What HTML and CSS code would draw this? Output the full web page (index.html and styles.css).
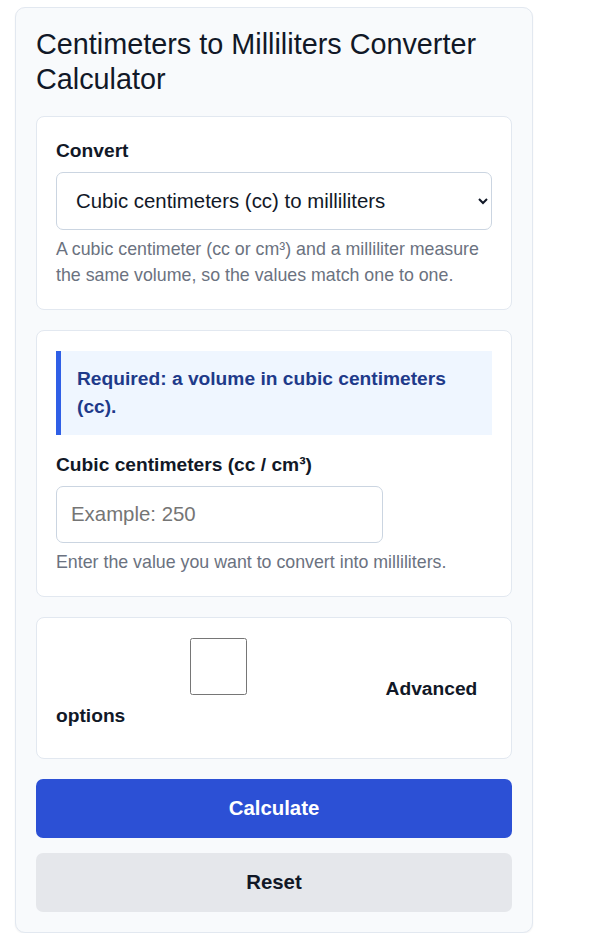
FILE: index.html
```html
<!DOCTYPE html>
<html lang="en">
<head>
<meta charset="utf-8">
<title>Centimeters to Milliliters Converter Calculator</title>
<link rel="stylesheet" href="styles.css">
</head>
<body>
<div class="calc">
  <h1 class="calc-title">Centimeters to Milliliters Converter Calculator</h1>

  <div class="card">
    <label class="field-label" for="mode">Convert</label>
    <select id="mode" class="field-select">
      <option>Cubic centimeters (cc) to milliliters</option>
    </select>
    <p class="hint">A cubic centimeter (cc or cm³) and a milliliter measure the same volume, so the values match one to one.</p>
  </div>

  <div class="card">
    <div class="notice">Required: a volume in cubic centimeters (cc).</div>
    <label class="field-label" for="cc">Cubic centimeters (cc / cm³)</label>
    <input id="cc" class="field-input" type="text" placeholder="Example: 250">
    <p class="hint">Enter the value you want to convert into milliliters.</p>
  </div>

  <div class="card">
    <label class="field-label"><input class="field-check" type="checkbox"> Advanced options</label>
  </div>

  <button class="btn btn-primary" type="button">Calculate</button>
  <button class="btn btn-secondary" type="button">Reset</button>
</div>
</body>
</html>
```

FILE: styles.css
```css
html, body {
  margin: 0;
  padding: 0;
  background: #ffffff;
}

body {
  font-family: "Liberation Sans", Arial, sans-serif;
  color: #111827;
}

.calc {
  box-sizing: border-box;
  width: 518px;
  margin: 7px 0 0 15px;
  padding: 19px 20px 20px;
  background: #f8fafc;
  border: 1px solid #e2e8f0;
  border-radius: 10px;
  box-shadow: 0 1px 2px rgba(15, 23, 42, 0.06);
}

.calc-title {
  margin: 0 0 20px;
  font-size: 28.8px;
  line-height: 34.5px;
  font-weight: 400;
  color: #111827;
}

.card {
  background: #ffffff;
  border: 1px solid #e2e8f0;
  border-radius: 8px;
  padding: 20px 19px 21px;
  margin-bottom: 20px;
}

.field-label {
  display: block;
  margin-bottom: 8px;
  font-size: 19.2px;
  line-height: 27px;
  font-weight: 700;
  color: #111827;
}

.field-select {
  box-sizing: border-box;
  display: block;
  width: 100%;
  height: 58px;
  padding: 0 18px 0 15px;
  font-family: inherit;
  font-size: 20.4px;
  color: #111827;
  background: #ffffff;
  border: 1px solid #cbd5e1;
  border-radius: 7px;
}

.field-input {
  box-sizing: border-box;
  display: block;
  width: 327px;
  height: 57px;
  padding: 0 14px;
  font-family: inherit;
  font-size: 20.4px;
  color: #111827;
  background: #ffffff;
  border: 1px solid #cbd5e1;
  border-radius: 7px;
}

.field-input::placeholder {
  color: #757575;
}

.field-check {
  width: 325px;
  height: 57px;
  margin: 0;
  vertical-align: baseline;
}

.hint {
  margin: 6px 0 0;
  font-size: 17.8px;
  line-height: 26px;
  color: #6b7280;
}

.notice {
  margin-bottom: 16px;
  padding: 14px 16px;
  background: #eff6ff;
  border-left: 5px solid #2f5fe6;
  font-size: 19.2px;
  line-height: 28px;
  font-weight: 700;
  color: #1e3a8a;
}

.btn {
  display: block;
  width: 100%;
  height: 59px;
  border: 0;
  border-radius: 7px;
  font-family: inherit;
  font-size: 20.4px;
  font-weight: 700;
  cursor: pointer;
}

.btn-primary {
  background: #2c50d5;
  color: #ffffff;
}

.btn-secondary {
  margin-top: 15px;
  background: #e5e7eb;
  color: #111827;
}
```
